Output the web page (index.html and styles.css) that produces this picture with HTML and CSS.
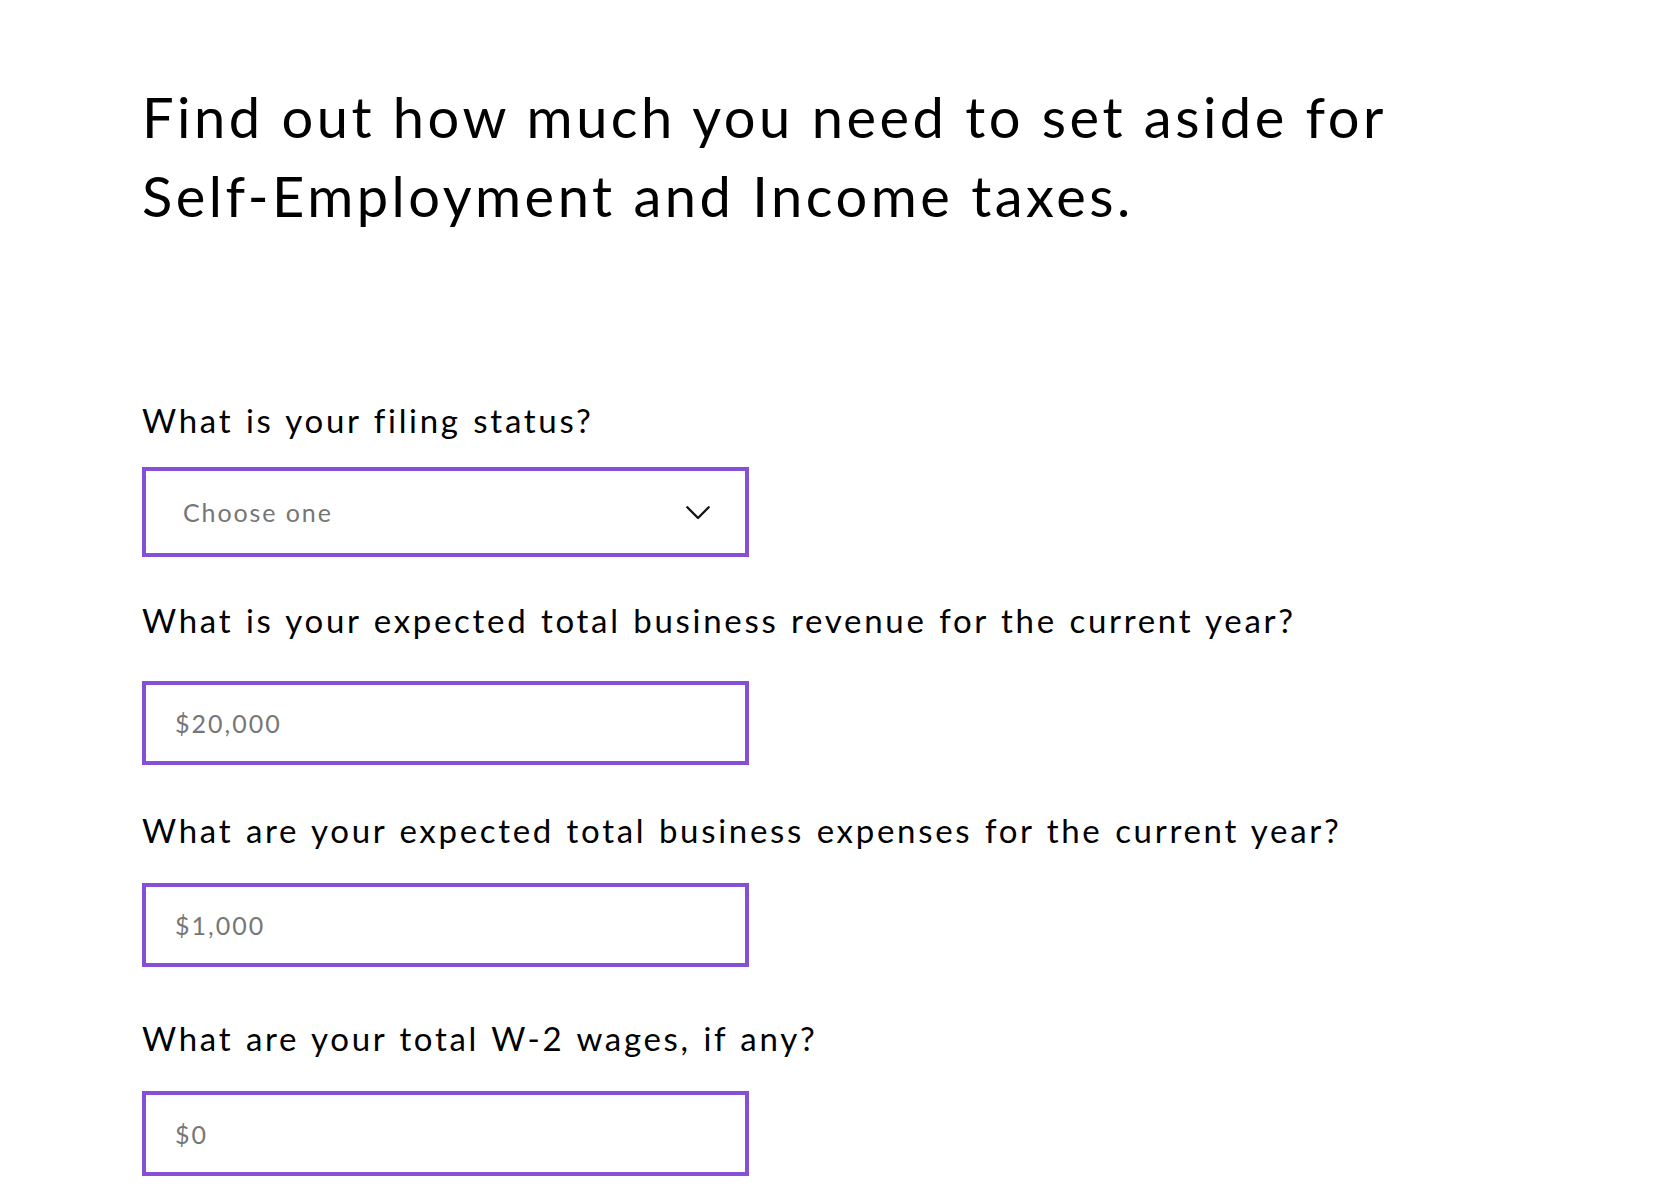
FILE: index.html
```html
<!DOCTYPE html>
<html lang="en">
<head>
<meta charset="utf-8">
<title>Self-Employment Tax Calculator</title>
<link rel="stylesheet" href="styles.css">
</head>
<body>
<main class="page">
  <h1 class="title">Find out how much you need to set aside for<br>Self-Employment and Income taxes.</h1>
  <form class="form">
    <div class="field field--first">
      <label class="label label--tight" for="status">What is your filing status?</label>
      <div class="select" id="status">
        <span class="select__value">Choose one</span>
        <svg class="select__chevron" width="24" height="14" viewBox="0 0 24 14" aria-hidden="true">
          <path d="M1.3 1.3 L12 12 L22.7 1.3" fill="none" stroke="#111" stroke-width="2.3" stroke-linecap="round" stroke-linejoin="round"/>
        </svg>
      </div>
    </div>
    <div class="field field--revenue">
      <label class="label label--wide" for="revenue">What is your expected total business revenue for the current year?</label>
      <input class="input" id="revenue" type="text" placeholder="$20,000">
    </div>
    <div class="field field--expenses">
      <label class="label label--mid" for="expenses">What are your expected total business expenses for the current year?</label>
      <input class="input" id="expenses" type="text" placeholder="$1,000">
    </div>
    <div class="field field--wages">
      <label class="label label--mid" for="wages">What are your total W-2 wages, if any?</label>
      <input class="input input--tall" id="wages" type="text" placeholder="$0">
    </div>
  </form>
</main>
</body>
</html>
```
FILE: styles.css
```css
* {
  box-sizing: border-box;
}

html, body {
  margin: 0;
  padding: 0;
  background: #ffffff;
}

body {
  font-family: "Lato", "Open Sans", sans-serif;
  color: #000;
}

.page {
  padding: 77px 0 0 142px;
}

.title {
  margin: 0 0 165px 0;
  font-size: 56px;
  font-weight: 400;
  line-height: 79px;
  letter-spacing: 3.5px;
  color: #000;
}

.form {
  display: flex;
  flex-direction: column;
}

.field {
  display: flex;
  flex-direction: column;
  align-items: flex-start;
}

.field--revenue { margin-top: 43px; }
.field--expenses { margin-top: 45px; }
.field--wages { margin-top: 51px; }

.label {
  display: block;
  font-size: 33px;
  line-height: 40px;
  font-weight: 400;
  letter-spacing: 2.7px;
  word-spacing: 1.5px;
  color: #000;
}

.label--tight { margin-bottom: 27px; }
.label--wide { margin-bottom: 41px; }
.label--mid { margin-bottom: 33px; }

.select {
  width: 607px;
  height: 90px;
  border: 4px solid #8650d6;
  display: flex;
  align-items: center;
  justify-content: space-between;
  padding: 0 35px 0 37px;
}

.select__value {
  font-size: 25px;
  color: #767676;
  letter-spacing: 1.9px;
}

.select__chevron {
  display: block;
  margin-top: 1px;
}

.input {
  width: 607px;
  height: 84px;
  border: 4px solid #8650d6;
  border-radius: 0;
  padding: 0 0 0 29px;
  font-family: "Lato", "Open Sans", sans-serif;
  font-size: 25px;
  letter-spacing: 2px;
  color: #333;
  background: #fff;
  outline: none;
}

.input--tall {
  height: 85px;
}

.input::placeholder {
  color: #767676;
  opacity: 1;
}
```
